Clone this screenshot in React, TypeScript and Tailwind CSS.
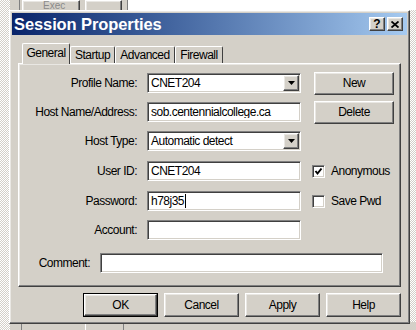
import React from 'react';

const raised =
  "border border-t-white border-l-white border-r-[#404040] border-b-[#404040] shadow-[inset_-1px_-1px_0_#808080,inset_1px_1px_0_#e9e7e3]";
const sunken =
  "border border-t-[#808080] border-l-[#808080] border-r-white border-b-white shadow-[inset_1px_1px_0_#404040,inset_-1px_-1px_0_#d4d0c8]";

const ArrowIcon = () => (
  <svg width="7" height="4" viewBox="0 0 7 4">
    <polygon points="0,0 7,0 3.5,4" fill="#000" />
  </svg>
);

const Field = ({ value, combo, caret, className }: { value?: string; combo?: boolean; caret?: boolean; className?: string }) => (
  <div className={`${sunken} bg-white h-[20px] flex items-center ${className ?? "w-[154px]"}`}>
    <div className="flex-1 px-[3px] text-black whitespace-nowrap overflow-hidden flex items-center">
      {value}
      {caret && <span className="inline-block w-px h-[14px] bg-black ml-px" />}
    </div>
    {combo && (
      <div className={`${raised} bg-[#d4d0c8] w-[16px] h-[16px] mr-[1px] flex items-center justify-center`}>
        <ArrowIcon />
      </div>
    )}
  </div>
);

const CheckBox = ({ label, checked }: { label: string; checked?: boolean }) => (
  <div className="flex items-center ml-[-2px]">
    <div className={`${sunken} bg-white w-[13px] h-[13px] flex items-center justify-center`}>
      {checked && (
        <svg width="9" height="9" viewBox="0 0 9 9">
          <polyline points="1.5,4 3.5,6.5 7.5,1.5" fill="none" stroke="#000" strokeWidth="2" />
        </svg>
      )}
    </div>
    <span className="ml-[6px]">{label}</span>
  </div>
);

const Btn = ({ label, isDefault, className }: { label: string; isDefault?: boolean; className?: string }) => (
  <div
    className={`${isDefault ? "border border-black" : ""} bg-[#d4d0c8] flex ${className ?? "w-[75px] h-[24px]"}`}
  >
    <div className={`${raised} flex-1 flex items-center justify-center`}>{label}</div>
  </div>
);

const rows = [
  { label: "Profile Name:", value: "CNET204", combo: true, right: <Btn label="New" className="w-[80px] h-[23px]" /> },
  { label: "Host Name/Address:", value: "sob.centennialcollege.ca", right: <Btn label="Delete" className="w-[80px] h-[23px]" /> },
  { label: "Host Type:", value: "Automatic detect", combo: true },
  { label: "User ID:", value: "CNET204", right: <CheckBox label="Anonymous" checked />, extra: "mt-px" },
  { label: "Password:", value: "h78j35", caret: true, right: <CheckBox label="Save Pwd" />, extra: "mt-px" },
  { label: "Account:", value: "" },
];

const tabs = [
  { name: "General", w: "w-[48px]", active: true },
  { name: "Startup", w: "w-[45px]" },
  { name: "Advanced", w: "w-[60px]" },
  { name: "Firewall", w: "w-[48px]" },
];

export default function App() {
  return (
    <div className="relative w-[416px] h-[330px] overflow-hidden bg-[repeating-conic-gradient(#d4d0c8_0%_25%,#ffffff_0%_50%)] bg-[length:2px_2px] text-[12px] tracking-[-0.5px] leading-none text-black font-['Liberation_Sans',Arial,sans-serif]">
      {/* window behind the dialog */}
      <div className="flex flex-col h-full">
        <div className="flex h-[10px] overflow-hidden">
          <div className="w-[10px]" />
          <div className="w-[118px] bg-[#d4d0c8] flex border-r border-[#808080] pl-[9px]">
            <div className="w-[2px] border-l border-[#808080] mr-[1px]" />
            <div className={`${raised} w-[58px] h-[20px] text-[#8a8a8a] text-[10px] leading-[9px] tracking-normal pl-[20px]`}>Exec</div>
            <div className="w-[5px]" />
            <div className={`${raised} w-[37px] h-[20px]`} />
          </div>
          <div className="flex-1 bg-white" />
        </div>
        <div className="flex-1" />
        <div className="flex h-[8px]">
          <div className="w-[10px]" />
          <div className="flex-1 bg-[#d4d0c8] flex pl-[11px]">
            <div className="w-[64px] border-l border-[#808080]" />
            <div className="w-[38px] border-l border-white" />
            <div className="w-[6px] border-l border-[#808080]" />
          </div>
        </div>
      </div>

      {/* dialog */}
      <div className={`absolute left-[9px] top-[10px] w-[401px] h-[314px] bg-[#d4d0c8] ${raised} p-[2px] flex flex-col`}>
        <div className="h-[22px] flex items-center bg-gradient-to-r from-[#0a246a] to-[#a6caf0] pl-[2px] pr-[4px]">
          <span className="flex-1 text-white text-[16.5px] font-bold tracking-[-0.1px]">
            Session Properties
          </span>
          <div className={`${raised} bg-[#d4d0c8] w-[16px] h-[14px] flex items-center justify-center text-[12px] font-bold tracking-normal`}>
            ?
          </div>
          <div className={`${raised} bg-[#d4d0c8] w-[16px] h-[14px] ml-[2px] flex items-center justify-center`}>
            <svg width="8" height="7" viewBox="0 0 8 7">
              <path d="M0.5 0.5 L7.5 6.5 M7.5 0.5 L0.5 6.5" stroke="#000" strokeWidth="1.8" />
            </svg>
          </div>
        </div>

        <div className="px-[6px] pt-[8px] flex flex-col">
          {/* tabs */}
          <div className="flex items-end h-[20px] pl-[4px]">
            {tabs.map((t) => (
              <div
                key={t.name}
                className={`${t.w} flex items-center justify-center border-t border-l border-t-white border-l-white border-r border-r-[#404040] rounded-t-[2px] bg-[#d4d0c8] ${
                  t.active ? "h-[21px] mb-[-1px] relative z-10 pb-[2px]" : "h-[17px]"
                }`}
              >
                {t.name}
              </div>
            ))}
          </div>

          {/* tab panel */}
          <div className={`${raised} h-[224px] pt-[9px] flex flex-col`}>
            <div className="flex flex-col gap-[9px]">
              {rows.map((r) => (
                <div key={r.label} className={`flex items-center h-[20px] ${r.extra ?? ""}`}>
                  <div className="w-[118px] text-right whitespace-nowrap">{r.label}</div>
                  <Field value={r.value} combo={r.combo} caret={r.caret} className="w-[154px] ml-[10px]" />
                  <div className="ml-[13px] w-[80px] flex items-center">{r.right}</div>
                </div>
              ))}
            </div>
            <div className="flex items-center h-[20px] mt-[13px]">
              <div className="w-[71px] text-right">Comment:</div>
              <Field className="w-[283px] ml-[10px]" />
            </div>
          </div>

          {/* bottom buttons */}
          <div className="flex justify-end gap-[6px] mt-[6px]">
            <Btn label="OK" isDefault />
            <Btn label="Cancel" />
            <Btn label="Apply" />
            <Btn label="Help" />
          </div>
        </div>
      </div>
    </div>
  );
}
